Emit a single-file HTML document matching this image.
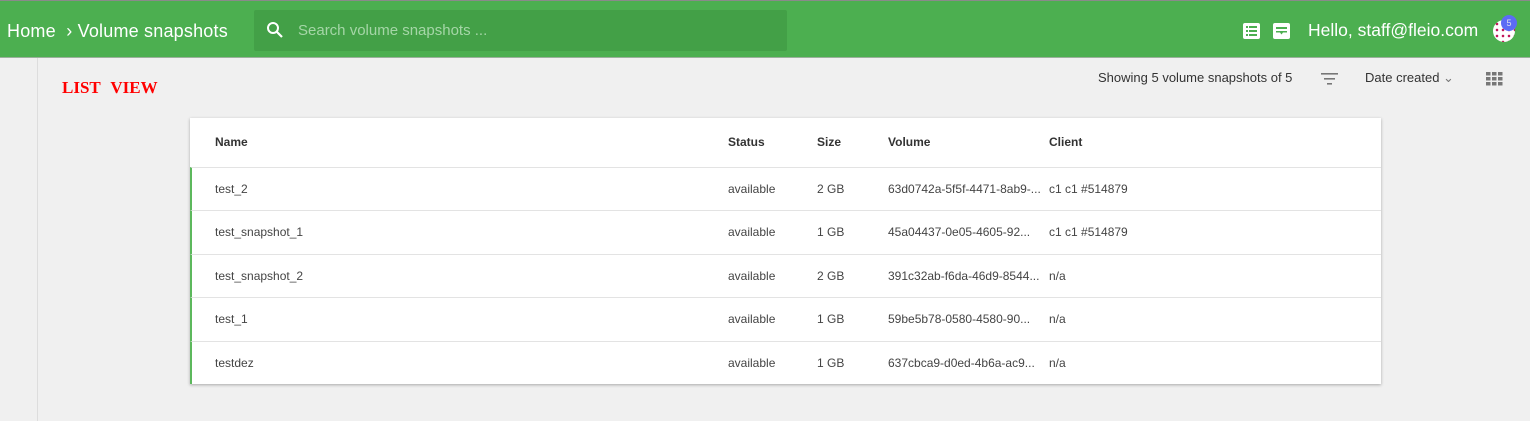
<!DOCTYPE html>
<html><head><meta charset="utf-8"><style>
*{box-sizing:border-box;margin:0;padding:0}
body{width:1530px;height:421px;overflow:hidden;background:#f0f0f0;font-family:"Liberation Sans",sans-serif;position:relative}
.hdr{position:absolute;left:0;top:0;width:1530px;height:58px;background:#4caf50;border-top:1px solid #8a8a8a;border-bottom:1px solid #9bb09c}
.crumb{position:absolute;left:7px;top:20px;color:#fff;font-size:18px;letter-spacing:0.2px}
.search{position:absolute;left:254px;top:9px;width:533px;height:41px;background:#43a047;border-radius:2px}
.search span{position:absolute;left:44px;top:12px;color:#a5d6a7;font-size:15px}
.hello{position:absolute;left:1308px;top:19px;color:#fff;font-size:17.5px}
.side{position:absolute;left:37px;top:58px;width:1px;height:363px;background:#ddd}
.lv{position:absolute;left:62px;top:78px;color:#f00;font-family:"Liberation Serif",serif;font-weight:bold;font-size:17px;word-spacing:6px}
.show{position:absolute;left:1098px;top:70px;font-size:13px;color:#333}
.date{position:absolute;left:1365px;top:70px;font-size:13px;color:#333}
.card{position:absolute;left:190px;top:118px;width:1191px;height:266px;background:#fff;box-shadow:0 1px 3px rgba(0,0,0,.3)}
.row{position:absolute;left:0;width:1191px;height:44px;border-top:1px solid #e3e3e3;font-size:12px;color:#444}
.row.d{border-left:2px solid #5cb85c}
.row span{position:absolute;top:14px}
.th span{font-weight:bold;color:#333;top:17px}
</style></head><body>
<div class="hdr">
<div class="crumb">Home &nbsp;›&nbsp;Volume snapshots</div>
<div class="search"><svg style="position:absolute;left:12px;top:11px" width="18" height="18" viewBox="0 0 18 18"><circle cx="7" cy="7" r="5" fill="none" stroke="#fff" stroke-width="2"/><path d="M11 11l5 5" stroke="#fff" stroke-width="2.2"/></svg><span>Search volume snapshots ...</span></div>
<svg style="position:absolute;left:1243px;top:22px" width="17" height="16"><rect width="17" height="16" rx="2" fill="#fff"/><g fill="#4caf50"><rect x="3" y="3" width="2" height="2"/><rect x="6" y="3" width="8" height="2"/><rect x="3" y="7" width="2" height="2"/><rect x="6" y="7" width="8" height="2"/><rect x="3" y="11" width="2" height="2"/><rect x="6" y="11" width="8" height="2"/></g></svg>
<svg style="position:absolute;left:1273px;top:22px" width="17" height="16"><rect width="17" height="16" rx="2" fill="#fff"/><rect x="3" y="4" width="11" height="2" fill="#4caf50"/><path d="M3 8h11v1.5l-4 0-1.5 2-1.5-2-4 0z" fill="#4caf50"/></svg>
<div class="hello">Hello, staff@fleio.com</div>
<div style="position:absolute;left:1493px;top:19px;width:22px;height:22px;border-radius:50%;background:#fff radial-gradient(circle,#c2185b 1.1px,transparent 1.5px) 1px 1px/6px 6px"></div>
<div style="position:absolute;left:1501px;top:14px;width:16px;height:16px;border-radius:50%;background:#5c6bf5;color:#dde;font-size:9px;text-align:center;line-height:16px">5</div>
</div>
<div class="side"></div>
<div class="lv">LIST VIEW</div>
<div class="show">Showing 5 volume snapshots of 5</div>
<svg style="position:absolute;left:1321px;top:72px" width="17" height="13"><rect x="0" y="1" width="17" height="1.6" fill="#777"/><rect x="3" y="6" width="11" height="1.6" fill="#777"/><rect x="6" y="11" width="5" height="1.6" fill="#777"/></svg>
<div class="date">Date created <span style="color:#777">&#8964;</span></div>
<svg style="position:absolute;left:1486px;top:72px" width="17" height="14" fill="#777"><rect x="0" y="0" width="4.5" height="3.5"/><rect x="6" y="0" width="4.5" height="3.5"/><rect x="12" y="0" width="4.5" height="3.5"/><rect x="0" y="5" width="4.5" height="3.5"/><rect x="6" y="5" width="4.5" height="3.5"/><rect x="12" y="5" width="4.5" height="3.5"/><rect x="0" y="10" width="4.5" height="3.5"/><rect x="6" y="10" width="4.5" height="3.5"/><rect x="12" y="10" width="4.5" height="3.5"/></svg>
<div class="card">
<div class="row th" style="top:0;height:49px;border-top:none"><span style="left:25px">Name</span><span style="left:538px">Status</span><span style="left:627px">Size</span><span style="left:698px">Volume</span><span style="left:859px">Client</span></div>
<div class="row d" style="top:49px"><span style="left:23px">test_2</span><span style="left:536px">available</span><span style="left:625px">2 GB</span><span style="left:696px">63d0742a-5f5f-4471-8ab9-...</span><span style="left:857px">c1 c1 #514879</span></div>
<div class="row d" style="top:92px"><span style="left:23px">test_snapshot_1</span><span style="left:536px">available</span><span style="left:625px">1 GB</span><span style="left:696px">45a04437-0e05-4605-92...</span><span style="left:857px">c1 c1 #514879</span></div>
<div class="row d" style="top:136px"><span style="left:23px">test_snapshot_2</span><span style="left:536px">available</span><span style="left:625px">2 GB</span><span style="left:696px">391c32ab-f6da-46d9-8544...</span><span style="left:857px">n/a</span></div>
<div class="row d" style="top:179px"><span style="left:23px">test_1</span><span style="left:536px">available</span><span style="left:625px">1 GB</span><span style="left:696px">59be5b78-0580-4580-90...</span><span style="left:857px">n/a</span></div>
<div class="row d" style="top:223px;height:43px"><span style="left:23px">testdez</span><span style="left:536px">available</span><span style="left:625px">1 GB</span><span style="left:696px">637cbca9-d0ed-4b6a-ac9...</span><span style="left:857px">n/a</span></div>
</div>
</body></html>
